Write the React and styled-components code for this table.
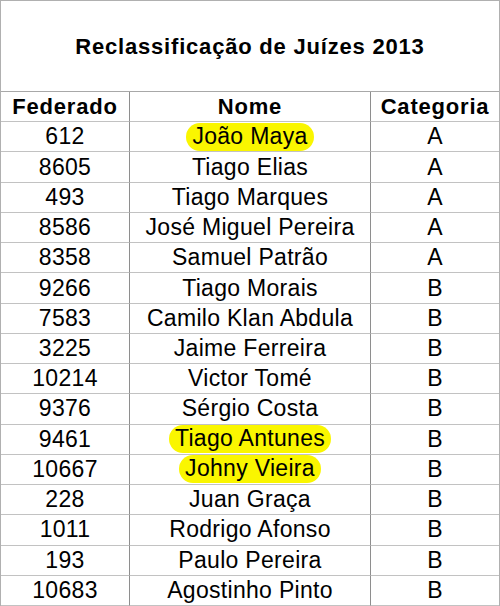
import styled, { createGlobalStyle } from "styled-components";

const rows = [
  { id: "612", name: "João Maya", cat: "A", mark: true },
  { id: "8605", name: "Tiago Elias", cat: "A" },
  { id: "493", name: "Tiago Marques", cat: "A" },
  { id: "8586", name: "José Miguel Pereira", cat: "A" },
  { id: "8358", name: "Samuel Patrão", cat: "A" },
  { id: "9266", name: "Tiago Morais", cat: "B" },
  { id: "7583", name: "Camilo Klan Abdula", cat: "B" },
  { id: "3225", name: "Jaime Ferreira", cat: "B" },
  { id: "10214", name: "Victor Tomé", cat: "B" },
  { id: "9376", name: "Sérgio Costa", cat: "B" },
  { id: "9461", name: "Tiago Antunes", cat: "B", mark: true },
  { id: "10667", name: "Johny Vieira", cat: "B", mark: true },
  { id: "228", name: "Juan Graça", cat: "B" },
  { id: "1011", name: "Rodrigo Afonso", cat: "B" },
  { id: "193", name: "Paulo Pereira", cat: "B" },
  { id: "10683", name: "Agostinho Pinto", cat: "B" },
];

const App = () => {
  return (
    <>
      <GlobalStyle />
      <Sheet>
        <Title>Reclassificação de Juízes 2013</Title>
        <HeadCell>Federado</HeadCell>
        <HeadCell>Nome</HeadCell>
        <HeadCell $last>Categoria</HeadCell>
        {rows.map((r) => (
          <Row key={r.id}>
            <Cell>{r.id}</Cell>
            <Cell>{r.mark ? <Highlight>{r.name}</Highlight> : r.name}</Cell>
            <Cell $last>{r.cat}</Cell>
          </Row>
        ))}
      </Sheet>
    </>
  );
};

export default App;

const GlobalStyle = createGlobalStyle`
  body {
    margin: 0;
    background: #fff;
    font-family: "Liberation Sans", Arial, sans-serif;
    color: #000;
  }
`;
const Sheet = styled.div`
  box-sizing: border-box;
  width: 500px;
  height: 606px;
  border: 1px solid #b0b0b0;
  border-bottom: none;
  display: grid;
  grid-template-columns: 129px 241px 128px;
  grid-template-rows: 91px repeat(17, 1fr);
`;
const Title = styled.div`
  grid-column: 1 / -1;
  display: flex;
  align-items: center;
  justify-content: center;
  border-bottom: 1px solid #a8a8a8;
  font-weight: bold;
  font-size: 22px;
  letter-spacing: 0.8px;
  padding-top: 1px;
`;
const Row = styled.div`
  display: contents;
`;
const Cell = styled.div`
  box-sizing: border-box;
  display: flex;
  align-items: center;
  justify-content: center;
  border-bottom: 1px solid #c2c2c2;
  border-right: ${(p) => (p.$last ? "none" : "1px solid #8e8e8e")};
  font-size: 23px;
  letter-spacing: 0.3px;
  white-space: nowrap;
`;
const HeadCell = styled(Cell)`
  font-weight: bold;
  font-size: 22px;
  letter-spacing: 0.8px;
`;
const Highlight = styled.span`
  background: #faf600;
  border-radius: 14px;
  padding: 0 6px 1px;
`;
